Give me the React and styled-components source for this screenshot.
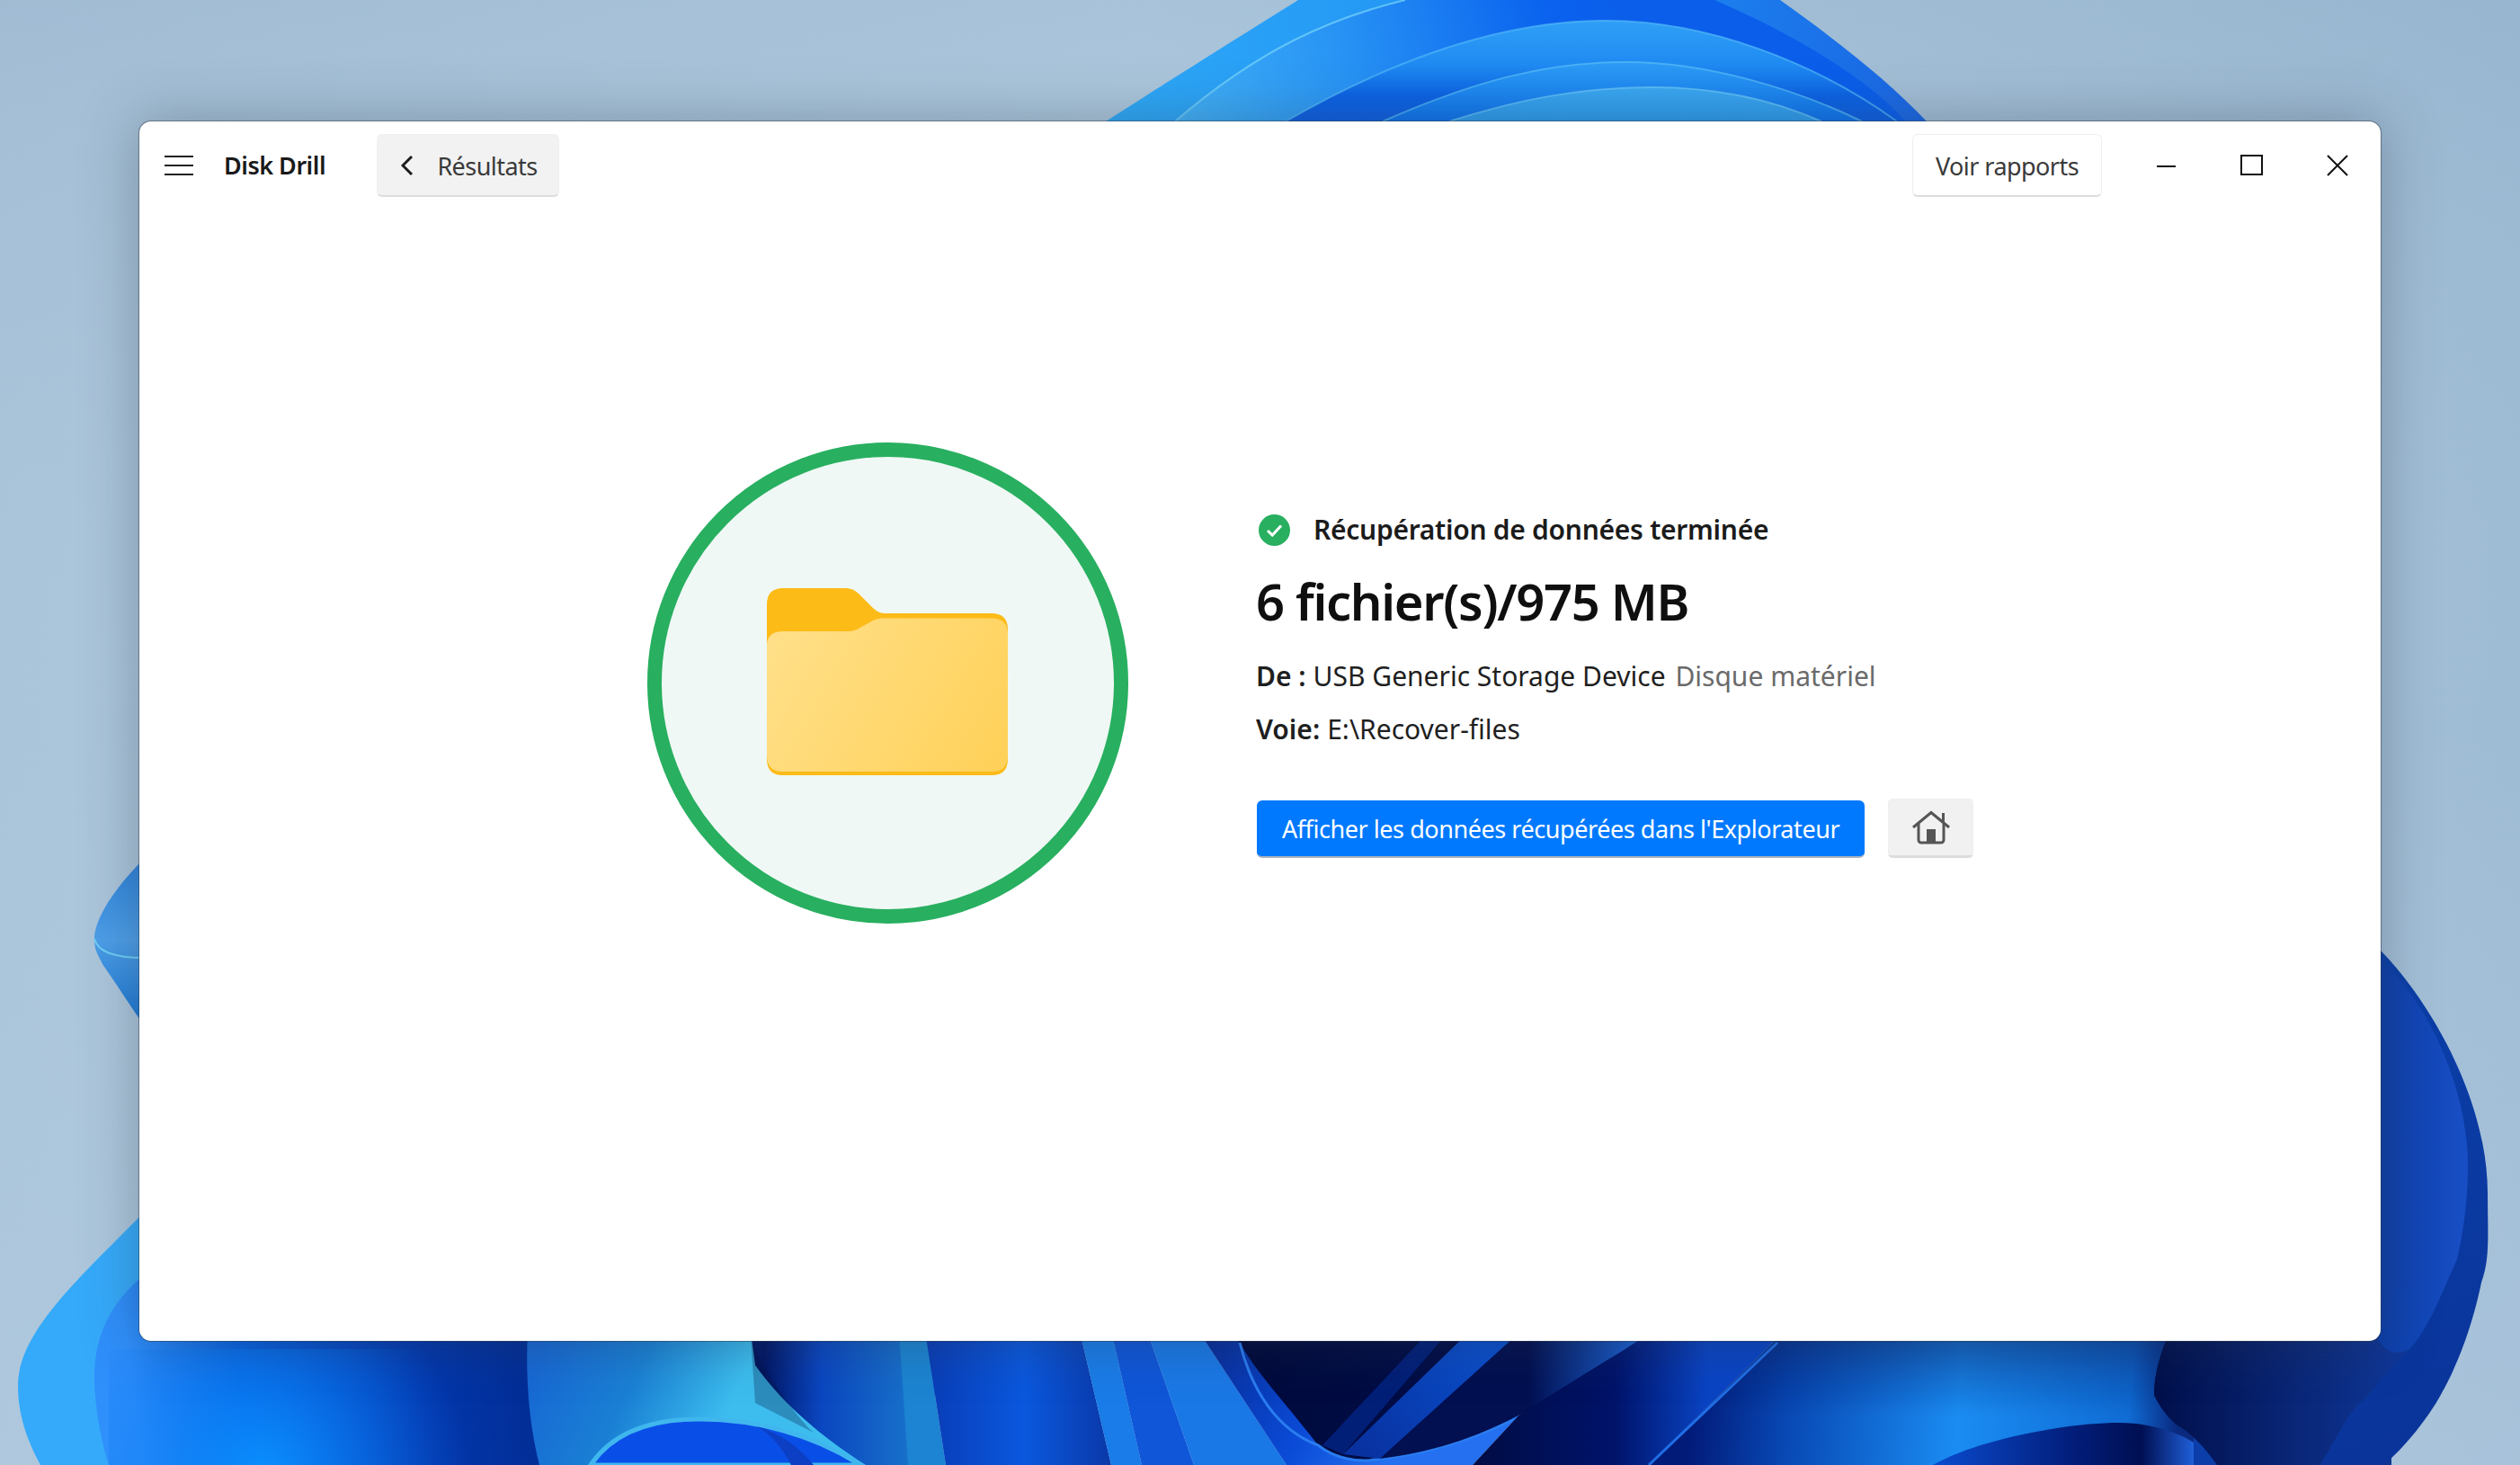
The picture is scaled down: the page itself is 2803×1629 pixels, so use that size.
import React from "react";
import styled, { createGlobalStyle } from "styled-components";

const Global = createGlobalStyle`
  html, body { margin: 0; padding: 0; background: #a9c3da; }
  * { box-sizing: border-box; }
`;

const FONT = `"Noto Sans", "Open Sans", "Liberation Sans", sans-serif`;

const Desktop = styled.div`
  position: relative;
  width: 2803px;
  height: 1629px;
  overflow: hidden;
  padding: 135px 0 0 155px;
  font-family: ${FONT};
`;

const Wallpaper = styled.svg`
  position: absolute;
  inset: 0;
  width: 2803px;
  height: 1629px;
`;

const Window = styled.main`
  position: relative;
  width: 2493px;
  height: 1356px;
  background: #fff;
  border-radius: 13px;
  box-shadow: 0 0 0 1px rgba(50, 62, 75, 0.5), 0 0 62px 2px rgba(45, 55, 70, 0.34);
  display: flex;
  flex-direction: column;
`;

const TitleBar = styled.header`
  height: 97px;
  display: flex;
  align-items: center;
  padding: 0 1px 0 28px;
  flex: none;
`;

const MenuIcon = styled.svg`
  width: 32px;
  height: 24px;
  flex: none;
`;

const AppName = styled.h1`
  width: 170px;
  margin: 0 0 0 34px;
  font-size: 27px;
  font-weight: 600;
  letter-spacing: -0.5px;
  color: #1a1a1a;
  line-height: 36px;
  flex: none;
`;

const ToolButton = styled.button`
  height: 70px;
  width: ${(p) => p.$width}px;
  display: flex;
  align-items: center;
  justify-content: center;
  gap: 26px;
  font-family: ${FONT};
  font-size: 27px;
  letter-spacing: -0.55px;
  color: #3a3a3a;
  border-radius: 6px;
  padding: 2px 0 0 ${(p) => (p.$outlined ? 0 : 3)}px;
  flex: none;
  background: ${(p) => (p.$outlined ? "#fff" : "#f2f2f2")};
  border: 1px solid ${(p) => (p.$outlined ? "#eeeeee" : "#f0f0f0")};
  border-bottom: 2px solid #dcdcdc;
`;

const Chevron = styled.svg`
  width: 14px;
  height: 24px;
  flex: none;
`;

const Spacer = styled.div`
  flex: 1;
`;

const CaptionGroup = styled.div`
  display: flex;
  margin-left: 24px;
`;

const CaptionButton = styled.div`
  width: 95px;
  height: 60px;
  display: flex;
  align-items: center;
  justify-content: center;
`;

const CaptionIcon = styled.svg`
  width: 26px;
  height: 26px;
`;

const Content = styled.section`
  display: flex;
  align-items: center;
  align-self: flex-start;
  gap: 142px;
  padding: 257px 0 0 565px;
  height: 797px;
  flex: none;
`;

const Badge = styled.div`
  width: 535px;
  height: 535px;
  flex: none;
  border-radius: 50%;
  background: #eff8f4;
  border: 16px solid #28af60;
  display: flex;
  align-items: center;
  justify-content: center;
`;

const FolderArt = styled.svg`
  width: 268px;
  height: 208px;
  margin: -2px 0 0 -2px;
`;

const Details = styled.div`
  display: flex;
  flex-direction: column;
  align-items: flex-start;
  margin-top: 7px;
`;

const Status = styled.div`
  display: flex;
  align-items: center;
  gap: 26px;
  height: 36px;
  margin-left: 3px;
`;

const StatusIcon = styled.svg`
  width: 35px;
  height: 35px;
  flex: none;
`;

const StatusText = styled.span`
  font-size: 30px;
  font-weight: 600;
  letter-spacing: -0.28px;
  color: #1b1b1b;
  line-height: 40px;
`;

const Headline = styled.h2`
  margin: 26px 0 0;
  font-size: 56px;
  font-weight: 600;
  letter-spacing: -1.3px;
  line-height: 70px;
  color: #0f0f0f;
`;

const InfoRow = styled.p`
  margin: ${(p) => p.$gap}px 0 0;
  font-size: 30px;
  line-height: 40px;
  letter-spacing: 0;
  color: #1f1f1f;
`;

const InfoLabel = styled.strong`
  font-weight: 600;
  margin-right: 8px;
`;

const InfoMuted = styled.span`
  color: #6a6a6a;
  margin-left: 3px;
`;

const Actions = styled.div`
  display: flex;
  align-items: flex-end;
  margin: 57px 0 0 1px;
  gap: 26px;
`;

const PrimaryButton = styled.button`
  height: 64px;
  width: 676px;
  border: none;
  border-bottom: 2px solid #a9b3bf;
  border-radius: 6px;
  background: #0079ff;
  color: #fff;
  font-family: ${FONT};
  font-size: 27px;
  letter-spacing: -0.44px;
  padding: 0;
`;

const HomeButton = styled.button`
  width: 95px;
  height: 66px;
  border: 1px solid #f0f0f0;
  border-bottom: 3px solid #dddddd;
  border-radius: 5px;
  background: #f1f1f1;
  display: flex;
  align-items: center;
  justify-content: center;
  padding: 0;
`;

const HomeIcon = styled.svg`
  width: 42px;
  height: 38px;
`;

function WallpaperArt() {
  return (
    <Wallpaper viewBox="0 0 2803 1629" aria-hidden="true">
      <defs>
        <linearGradient id="sky" x1="0" y1="0" x2="1" y2="0">
          <stop offset="0" stopColor="#aac4da" />
          <stop offset="0.45" stopColor="#b4cee2" />
          <stop offset="1" stopColor="#9fbcd5" />
        </linearGradient>
        <linearGradient id="skyV" x1="0" y1="0" x2="0" y2="1">
          <stop offset="0" stopColor="#7f9fbc" stopOpacity="0.22" />
          <stop offset="0.5" stopColor="#b4cce1" stopOpacity="0" />
          <stop offset="1" stopColor="#b4cce1" stopOpacity="0.4" />
        </linearGradient>
        <linearGradient id="b1" x1="1230" y1="0" x2="2143" y2="0" gradientUnits="userSpaceOnUse">
          <stop offset="0" stopColor="#2ea9f8" />
          <stop offset="0.6" stopColor="#1d8cf2" />
          <stop offset="1" stopColor="#1a66e4" />
        </linearGradient>
        <linearGradient id="b2" x1="1307" y1="135" x2="1800" y2="0" gradientUnits="userSpaceOnUse">
          <stop offset="0" stopColor="#42b2f8" />
          <stop offset="0.4" stopColor="#2792f4" />
          <stop offset="0.85" stopColor="#0a62ee" />
          <stop offset="1" stopColor="#0a5eea" />
        </linearGradient>
        <linearGradient id="b3" x1="0" y1="23" x2="0" y2="135" gradientUnits="userSpaceOnUse">
          <stop offset="0" stopColor="#2f9ff6" />
          <stop offset="0.45" stopColor="#1f8af2" />
          <stop offset="0.75" stopColor="#0b62e4" />
          <stop offset="1" stopColor="#0d5fe2" />
        </linearGradient>
        <linearGradient id="b4" x1="0" y1="69" x2="0" y2="135" gradientUnits="userSpaceOnUse">
          <stop offset="0" stopColor="#2e9df6" />
          <stop offset="1" stopColor="#0c72ee" />
        </linearGradient>
        <linearGradient id="b5" x1="0" y1="97" x2="0" y2="135" gradientUnits="userSpaceOnUse">
          <stop offset="0" stopColor="#3aa8f2" />
          <stop offset="1" stopColor="#2c9bee" />
        </linearGradient>
        <linearGradient id="ls" x1="0" y1="963" x2="0" y2="1128" gradientUnits="userSpaceOnUse">
          <stop offset="0" stopColor="#2f85dd" />
          <stop offset="0.5" stopColor="#4d9fe9" />
          <stop offset="1" stopColor="#1f7bd8" />
        </linearGradient>
        <linearGradient id="blob" x1="150" y1="1560" x2="570" y2="1500" gradientUnits="userSpaceOnUse">
          <stop offset="0" stopColor="#2f8ffb" />
          <stop offset="0.28" stopColor="#0864e2" />
          <stop offset="0.75" stopColor="#0338ae" />
          <stop offset="1" stopColor="#022e98" />
        </linearGradient>
        <radialGradient id="glow" cx="290" cy="1640" r="230" gradientUnits="userSpaceOnUse">
          <stop offset="0" stopColor="#0a90ff" />
          <stop offset="1" stopColor="#0a70f0" stopOpacity="0" />
        </radialGradient>
        <linearGradient id="mid" x1="600" y1="1500" x2="800" y2="1590" gradientUnits="userSpaceOnUse">
          <stop offset="0" stopColor="#1768d4" />
          <stop offset="0.5" stopColor="#1a80d4" />
          <stop offset="1" stopColor="#3cbdee" />
        </linearGradient>
        <linearGradient id="gap" x1="850" y1="0" x2="1029" y2="0" gradientUnits="userSpaceOnUse">
          <stop offset="0" stopColor="#021767" />
          <stop offset="0.35" stopColor="#0a46c0" />
          <stop offset="1" stopColor="#1a78cc" />
        </linearGradient>
        <linearGradient id="fold" x1="1029" y1="0" x2="1230" y2="0" gradientUnits="userSpaceOnUse">
          <stop offset="0" stopColor="#093cb6" />
          <stop offset="0.55" stopColor="#0a58de" />
          <stop offset="1" stopColor="#0a3aac" />
        </linearGradient>
        <linearGradient id="band" x1="1333" y1="1493" x2="1540" y2="1629" gradientUnits="userSpaceOnUse">
          <stop offset="0" stopColor="#082b95" />
          <stop offset="0.6" stopColor="#0a4ad6" />
          <stop offset="1" stopColor="#2470f0" />
        </linearGradient>
        <linearGradient id="dark" x1="1640" y1="0" x2="1900" y2="0" gradientUnits="userSpaceOnUse">
          <stop offset="0" stopColor="#000c44" />
          <stop offset="0.6" stopColor="#00136a" />
          <stop offset="1" stopColor="#0a44c4" />
        </linearGradient>
        <linearGradient id="wide" x1="1880" y1="1560" x2="2420" y2="1600" gradientUnits="userSpaceOnUse">
          <stop offset="0" stopColor="#021a78" />
          <stop offset="0.2" stopColor="#0848b4" />
          <stop offset="0.55" stopColor="#1a8cf2" />
          <stop offset="0.9" stopColor="#0f6cd4" />
          <stop offset="1" stopColor="#0a2a80" />
        </linearGradient>
        <linearGradient id="wideTop" x1="0" y1="1490" x2="0" y2="1575" gradientUnits="userSpaceOnUse">
          <stop offset="0" stopColor="#021460" stopOpacity="0.38" />
          <stop offset="1" stopColor="#021460" stopOpacity="0" />
        </linearGradient>
        <linearGradient id="arch" x1="2150" y1="0" x2="2440" y2="0" gradientUnits="userSpaceOnUse">
          <stop offset="0" stopColor="#0a4cd0" />
          <stop offset="0.55" stopColor="#021c78" />
          <stop offset="0.8" stopColor="#000f52" />
          <stop offset="1" stopColor="#1f5fd8" />
        </linearGradient>
        <linearGradient id="navy" x1="2400" y1="0" x2="2680" y2="0" gradientUnits="userSpaceOnUse">
          <stop offset="0" stopColor="#01104c" />
          <stop offset="1" stopColor="#10389a" />
        </linearGradient>
        <linearGradient id="uDark" x1="1379" y1="0" x2="1828" y2="0" gradientUnits="userSpaceOnUse">
          <stop offset="0" stopColor="#000a3c" />
          <stop offset="1" stopColor="#010f52" />
        </linearGradient>
        <linearGradient id="streak" x1="1644" y1="1493" x2="1500" y2="1620" gradientUnits="userSpaceOnUse">
          <stop offset="0" stopColor="#0a4ecc" />
          <stop offset="1" stopColor="#082f9c" />
        </linearGradient>
        <linearGradient id="streak2" x1="1700" y1="0" x2="1828" y2="0" gradientUnits="userSpaceOnUse">
          <stop offset="0" stopColor="#020f50" />
          <stop offset="1" stopColor="#1b66dc" />
        </linearGradient>
        <linearGradient id="ro" x1="2650" y1="1060" x2="2760" y2="1600" gradientUnits="userSpaceOnUse">
          <stop offset="0" stopColor="#0a3fa8" />
          <stop offset="1" stopColor="#0a349a" />
        </linearGradient>
        <linearGradient id="ri" x1="2650" y1="0" x2="2745" y2="0" gradientUnits="userSpaceOnUse">
          <stop offset="0" stopColor="#0c3ea9" />
          <stop offset="1" stopColor="#194fc6" />
        </linearGradient>
      </defs>

      <rect width="2803" height="1629" fill="url(#sky)" />
      <rect width="2803" height="1629" fill="url(#skyV)" />

      {/* top bloom */}
      <path d="M1230 135 C1300 90 1380 40 1444 0 L1980 0 C2050 50 2100 90 2143 135 Z" fill="url(#b1)" />
      <path d="M1307 135 C1400 55 1480 20 1563 0 L1907 0 C2000 40 2080 90 2120 135 Z" fill="url(#b2)" />
      <path d="M1307 135 C1400 55 1480 20 1563 0" fill="none" stroke="#74d2fa" strokeWidth="2" strokeOpacity="0.75" />
      <path d="M1430 135 C1560 60 1680 23 1787 23 C1900 23 2020 70 2110 135 Z" fill="url(#b3)" />
      <path d="M1430 135 C1560 60 1680 23 1787 23 C1900 23 2020 70 2110 135" fill="none" stroke="#52b8f8" strokeWidth="2" strokeOpacity="0.7" />
      <path d="M1538 135 C1640 90 1720 69 1808 69 C1900 69 2000 100 2071 135 Z" fill="url(#b4)" />
      <path d="M1538 135 C1640 90 1720 69 1808 69 C1900 69 2000 100 2071 135" fill="none" stroke="#58bcf8" strokeWidth="2" strokeOpacity="0.7" />
      <path d="M1612 135 C1690 110 1760 97 1837 97 C1910 97 1970 110 2026 135 Z" fill="url(#b5)" />
      <path d="M1612 135 C1690 110 1760 97 1837 97 C1910 97 1970 110 2026 135" fill="none" stroke="#6ac6f8" strokeWidth="2" strokeOpacity="0.7" />

      {/* left ripple */}
      <path d="M160 955 C130 985 105 1020 105 1044 C105 1056 108 1060 114 1072 C130 1095 146 1120 160 1140 Z" fill="url(#ls)" />
      <path d="M105 1044 C108 1056 122 1065 160 1065" fill="none" stroke="#6fd0f4" strokeWidth="2" />

      {/* lower left */}
      <path d="M160 1348 C90 1420 20 1480 20 1541 C20 1580 35 1610 45 1629 L700 1629 L700 1340 Z" fill="#35aafa" />
      <path d="M160 1418 C120 1450 105 1490 105 1530 C105 1570 115 1610 121 1629 L640 1629 L640 1400 Z" fill="url(#blob)" />
      <rect x="121" y="1500" width="500" height="129" fill="url(#glow)" />

      {/* bottom strip */}
      <rect x="830" y="1480" width="210" height="149" fill="url(#gap)" />
      <path d="M587 1480 C584 1540 590 1590 600 1629 L963 1629 C910 1595 870 1560 840 1518 L835 1480 Z" fill="url(#mid)" />
      <path d="M835 1485 C840 1510 880 1570 905 1593 L840 1560 Z" fill="#021240" opacity="0.28" />
      <path d="M657 1629 C680 1595 720 1578 778 1578 C840 1578 905 1595 957 1629 Z" fill="#0a4ee8" stroke="#40b6ee" strokeWidth="5" />
      <path d="M842 1586 C870 1595 890 1610 905 1629 L880 1629 C870 1610 858 1595 842 1586 Z" fill="#0d3fc4" />

      <path d="M1000 1480 L1029 1480 L1052 1629 L1010 1629 Z" fill="#1c84d2" />
      <path d="M1029 1480 L1201 1480 L1236 1629 L1052 1629 Z" fill="url(#fold)" />
      <path d="M1201 1480 L1236 1480 L1270 1629 L1236 1629 Z" fill="#1a7ce8" />
      <path d="M1236 1480 L1276 1480 L1328 1629 L1270 1629 Z" fill="#0f56d8" />
      <path d="M1276 1480 L1333 1480 L1431 1629 L1328 1629 Z" fill="#1a78e6" />
      <path d="M1333 1480 L1379 1480 L1466 1607 C1485 1622 1510 1626 1529 1623 C1600 1613 1660 1573 1690 1573 L1638 1629 L1431 1629 Z" fill="url(#band)" />
      <path d="M1365 1480 L1840 1480 L1828 1493 C1780 1530 1740 1550 1690 1573 C1660 1590 1600 1613 1529 1623 C1510 1626 1485 1622 1466 1607 C1430 1560 1400 1530 1379 1493 Z" fill="url(#uDark)" />
      <path d="M1379 1493 C1392 1545 1420 1590 1466 1607 C1485 1622 1510 1626 1529 1623 C1620 1615 1730 1570 1830 1480" fill="none" stroke="#2a7cf0" strokeWidth="3" />
      <path d="M1590 1480 L1612 1480 L1494 1617 L1471 1607 Z" fill="#021f78" />
      <path d="M1635 1480 L1692 1480 L1535 1622 L1494 1617 Z" fill="url(#streak)" />
      <path d="M1692 1480 L1840 1480 L1690 1573 C1640 1600 1590 1615 1535 1622 Z" fill="url(#streak2)" />

      <path d="M1840 1480 L1985 1480 L1834 1629 L1638 1629 L1690 1573 Z" fill="url(#dark)" />
      <path d="M1985 1480 L2480 1480 L2480 1629 L1834 1629 Z" fill="url(#wide)" />
      <path d="M1985 1480 L2480 1480 L2480 1580 L1890 1580 Z" fill="url(#wideTop)" />
      <path d="M1977 1493 L1834 1629" fill="none" stroke="#1f6ee6" strokeWidth="3" />
      <path d="M2414 1480 C2395 1520 2395 1553 2397 1553 C2405 1570 2420 1585 2426 1587 C2445 1600 2460 1620 2466 1629 L2660 1629 L2660 1480 Z" fill="url(#navy)" />
      <path d="M2150 1629 C2200 1600 2300 1582 2357 1582 C2400 1582 2450 1600 2466 1629 Z" fill="url(#arch)" />

      {/* right lobe */}
      <path d="M2640 1050 L2649 1058 C2700 1110 2767 1220 2767 1327 C2767 1370 2770 1400 2760 1426 C2745 1500 2717 1547 2717 1547 C2700 1580 2665 1620 2650 1629 L2560 1629 L2560 1050 Z" fill="url(#ro)" />
      <path d="M2640 1062 L2649 1071 C2690 1100 2745 1200 2745 1296 C2745 1340 2738 1380 2733 1400 C2715 1440 2700 1480 2680 1500 C2660 1520 2640 1545 2630 1556 C2610 1570 2595 1610 2580 1629 L2440 1629 L2440 1062 Z" fill="url(#ri)" />
      <path d="M2440 1480 L2640 1480 C2650 1500 2660 1510 2680 1500 C2660 1520 2640 1545 2630 1556 C2610 1570 2595 1610 2580 1629 L2466 1629 C2460 1620 2445 1600 2426 1587 C2420 1585 2405 1570 2397 1553 C2395 1553 2395 1520 2414 1480 Z" fill="url(#navy)" />
    </Wallpaper>
  );
}

export default function App() {
  return (
    <>
      <Global />
      <Desktop>
        <WallpaperArt />
        <Window>
          <TitleBar>
            <MenuIcon viewBox="0 0 32 24">
              <path d="M0 2h32M0 12h32M0 22h32" stroke="#222" strokeWidth="2" fill="none" />
            </MenuIcon>
            <AppName>Disk Drill</AppName>
            <ToolButton $width={203}>
              <Chevron viewBox="0 0 14 24">
                <path d="M12 2 2 12l10 10" stroke="#1c1c1c" strokeWidth="3" fill="none" />
              </Chevron>
              Résultats
            </ToolButton>
            <Spacer />
            <ToolButton $width={211} $outlined>
              Voir rapports
            </ToolButton>
            <CaptionGroup>
              <CaptionButton>
                <CaptionIcon viewBox="0 0 26 26">
                  <path d="M2 14h21" stroke="#111" strokeWidth="2" fill="none" />
                </CaptionIcon>
              </CaptionButton>
              <CaptionButton>
                <CaptionIcon viewBox="0 0 26 26">
                  <rect x="1" y="2" width="23" height="21" stroke="#111" strokeWidth="2" fill="none" />
                </CaptionIcon>
              </CaptionButton>
              <CaptionButton>
                <CaptionIcon viewBox="0 0 26 26">
                  <path d="M2 2l22 22M24 2 2 24" stroke="#111" strokeWidth="2" fill="none" />
                </CaptionIcon>
              </CaptionButton>
            </CaptionGroup>
          </TitleBar>
          <Content>
            <Badge>
              <FolderArt viewBox="0 0 268 208">
                <defs>
                  <linearGradient id="folderFront" x1="0" y1="40" x2="268" y2="190" gradientUnits="userSpaceOnUse">
                    <stop offset="0" stopColor="#ffe08a" />
                    <stop offset="1" stopColor="#ffd159" />
                  </linearGradient>
                </defs>
                <path d="M18 0H88Q96 0 102 6L118 22Q124 28 132 28H250Q268 28 268 46V190Q268 208 250 208H18Q0 208 0 190V18Q0 0 18 0Z" fill="#fdbb18" />
                <path d="M0 64Q0 48 18 48H90Q96 48 100 46L118 36Q122 33.5 128 33.5H250Q268 33.5 268 52V186Q268 204 250 204H18Q0 204 0 186Z" fill="url(#folderFront)" />
              </FolderArt>
            </Badge>
            <Details>
              <Status>
                <StatusIcon viewBox="0 0 35 35">
                  <circle cx="17.5" cy="17.5" r="17.5" fill="#28af60" />
                  <path d="M10 18l5.2 5L25 12.5" stroke="#fff" strokeWidth="3" fill="none" />
                </StatusIcon>
                <StatusText>Récupération de données terminée</StatusText>
              </Status>
              <Headline>6 fichier(s)/975 MB</Headline>
              <InfoRow $gap={29}>
                <InfoLabel>De :</InfoLabel>USB Generic Storage Device
                <InfoMuted> Disque matériel</InfoMuted>
              </InfoRow>
              <InfoRow $gap={19}>
                <InfoLabel>Voie:</InfoLabel>E:\Recover-files
              </InfoRow>
              <Actions>
                <PrimaryButton>Afficher les données récupérées dans l'Explorateur</PrimaryButton>
                <HomeButton>
                  <HomeIcon viewBox="0 0 42 38">
                    <path d="M1 19 21 2.5 41 19" stroke="#555" strokeWidth="3" fill="none" />
                    <path d="M7 15V33a3 3 0 0 0 3 3H32a3 3 0 0 0 3-3V15" stroke="#555" strokeWidth="3" fill="none" />
                    <path d="M34.5 13V3" stroke="#555" strokeWidth="3" fill="none" />
                    <rect x="16" y="21" width="10" height="16" fill="#555" />
                  </HomeIcon>
                </HomeButton>
              </Actions>
            </Details>
          </Content>
        </Window>
      </Desktop>
    </>
  );
}
